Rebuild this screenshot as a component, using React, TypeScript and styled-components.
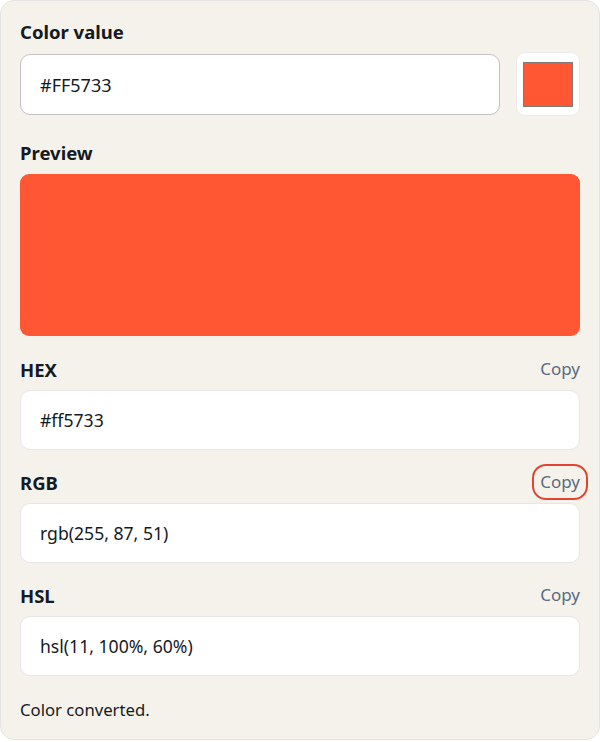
import React from "react";
import styled, { createGlobalStyle } from "styled-components";

const Global = createGlobalStyle`
  html, body { margin: 0; padding: 0; background: #ffffff; }
  * { box-sizing: border-box; }
  body { font-family: "Noto Sans", "Liberation Sans", sans-serif; color: #141a23; }
`;

const Card = styled.div`
  width: 600px;
  background: #f5f2eb;
  border: 1px solid #e3e3e3;
  border-radius: 14px;
  padding: 19px 19px 19px;
  display: flex;
  flex-direction: column;
`;

const Label = styled.div<{ $mt?: number }>`
  font-size: 18.5px;
  font-weight: 700;
  line-height: 24px;
  color: #141a23;
  margin-top: ${(p) => p.$mt ?? 0}px;
`;

const InputRow = styled.div`
  display: flex;
  align-items: center;
  gap: 16px;
  height: 64px;
  margin-top: 8px;
`;

const ColorInput = styled.div`
  flex: 1;
  height: 61px;
  margin-top: 1px;
  background: #fff;
  border: 1px solid #c2c2c2;
  border-radius: 10px;
  padding-left: 19px;
  display: flex;
  align-items: center;
  font-size: 18px;
  color: #141a23;
`;

const SwatchButton = styled.div`
  width: 64px;
  height: 64px;
  background: #fff;
  border: 1px solid #ececec;
  border-radius: 9px;
  display: flex;
  align-items: center;
  justify-content: center;
`;

const SwatchFill = styled.div<{ $c: string }>`
  width: 50px;
  height: 45px;
  background: ${(p) => p.$c};
  border: 1px solid #7a7a7a;
`;

const Preview = styled.div<{ $c: string }>`
  height: 162px;
  margin-top: 9px;
  background: ${(p) => p.$c};
  border-radius: 9px;
`;

const Section = styled.div<{ $first?: boolean }>`
  margin-top: ${(p) => (p.$first ? 17 : 16)}px;
  display: flex;
  flex-direction: column;
`;

const SectionHead = styled.div`
  height: 32px;
  display: flex;
  align-items: center;
  justify-content: space-between;
`;

const SectionTitle = styled.div`
  font-size: 18.5px;
  font-weight: 700;
  color: #141a23;
`;

const CopyButton = styled.button<{ $focused?: boolean }>`
  font-family: inherit;
  font-size: 17px;
  line-height: 20px;
  color: #5a6a7e;
  background: none;
  border: none;
  padding: 0;
  border-radius: 6px;
  cursor: pointer;
  outline: ${(p) => (p.$focused ? "2px solid #e1452f" : "none")};
  outline-offset: 6px;
`;

const ValueBox = styled.div`
  height: 60px;
  margin-top: 5px;
  background: #fff;
  border: 1px solid #e6e6e6;
  border-radius: 10px;
  padding-left: 19px;
  display: flex;
  align-items: center;
  font-size: 17.6px;
  color: #141a23;
`;

const Status = styled.div`
  margin-top: 24px;
  font-size: 16.7px;
  line-height: 20px;
  color: #141a23;
`;

const formats = [
  { name: "HEX", value: "#ff5733" },
  { name: "RGB", value: "rgb(255, 87, 51)", focused: true },
  { name: "HSL", value: "hsl(11, 100%, 60%)" },
];

export default function App() {
  const color = "#FF5733";
  return (
    <>
      <Global />
      <Card>
        <Label>Color value</Label>
        <InputRow>
          <ColorInput>{color}</ColorInput>
          <SwatchButton>
            <SwatchFill $c="#ff5733" />
          </SwatchButton>
        </InputRow>
        <Label $mt={25}>Preview</Label>
        <Preview $c="#ff5733" />
        {formats.map((f, i) => (
          <Section key={f.name} $first={i === 0}>
            <SectionHead>
              <SectionTitle>{f.name}</SectionTitle>
              <CopyButton $focused={f.focused}>Copy</CopyButton>
            </SectionHead>
            <ValueBox>{f.value}</ValueBox>
          </Section>
        ))}
        <Status>Color converted.</Status>
      </Card>
    </>
  );
}
